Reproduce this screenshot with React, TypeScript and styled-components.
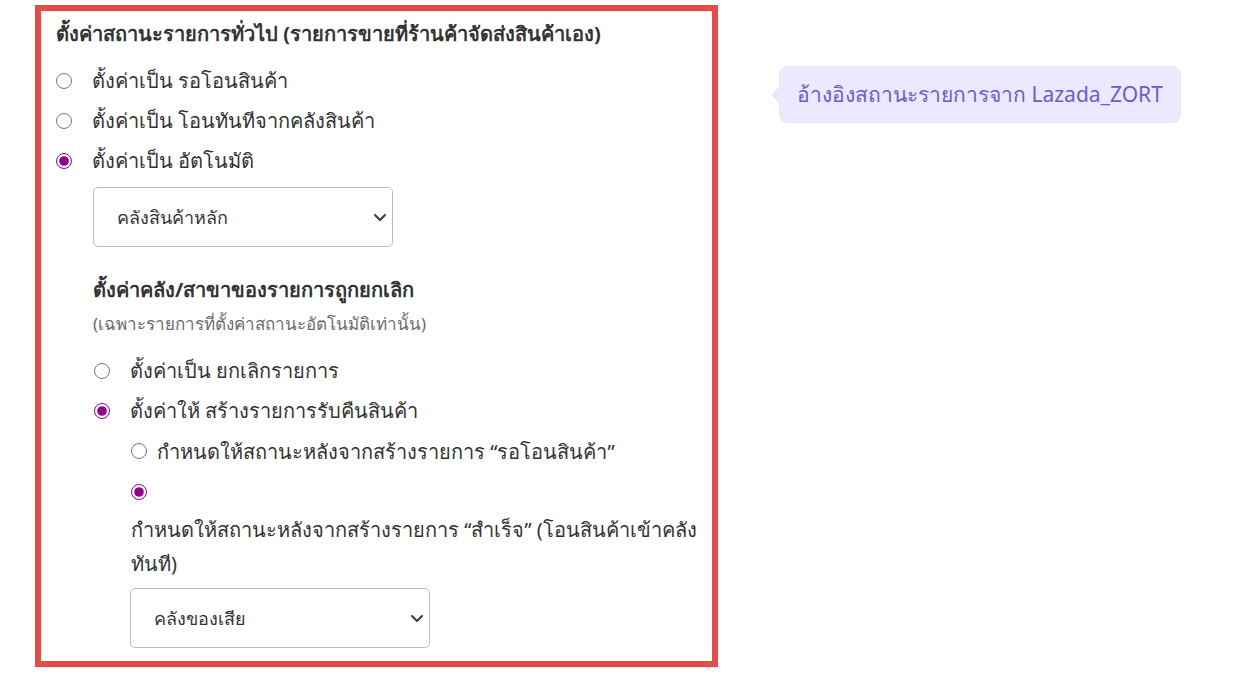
import React, { useState } from 'react';
import styled, { createGlobalStyle } from 'styled-components';

const GlobalStyle = createGlobalStyle`
  body {
    margin: 0;
    background: #ffffff;
    font-family: 'Noto Sans', 'Liberation Sans', sans-serif;
    color: #333333;
  }
`;

const Page = styled.div`
  display: flex;
  align-items: flex-start;
  padding: 5px 0 0 35px;
  width: 1239px;
  height: 678px;
  box-sizing: border-box;
`;

const Frame = styled.div`
  width: 683px;
  height: 662px;
  box-sizing: border-box;
  border: 6px solid #e84a47;
  padding: 6px 15px 0 15px;
`;

const Title = styled.div`
  font-size: 20px;
  font-weight: 700;
  line-height: 34px;
  margin-bottom: 10px;
`;

const Option = styled.label<{ $indent?: number }>`
  display: flex;
  align-items: center;
  gap: 20px;
  height: 40px;
  font-size: 20px;
  margin-left: ${(p) => p.$indent || 0}px;
  cursor: pointer;
`;

const Radio = styled.input.attrs({ type: 'radio' })`
  width: 16px;
  height: 16px;
  margin: 0;
  accent-color: #960092;
  flex-shrink: 0;
`;

const SubOption = styled.label`
  display: flex;
  flex-wrap: wrap;
  align-items: center;
  column-gap: 10px;
  font-size: 20px;
  line-height: 34px;
  margin-left: 75px;
  cursor: pointer;
  ${Radio} {
    margin: 12px 0 13px 0;
  }
`;

const SubText = styled.span`
  max-width: 100%;
`;

const SelectWrap = styled.div<{ $indent: number; $top: number }>`
  position: relative;
  width: 300px;
  margin: ${(p) => p.$top}px 0 0 ${(p) => p.$indent}px;
`;

const Select = styled.select`
  appearance: none;
  width: 100%;
  height: 60px;
  border: 1px solid #b9bec4;
  border-radius: 5px;
  background: #fff;
  padding: 0 40px 0 23px;
  font-family: inherit;
  font-size: 18px;
  color: #333;
  outline: none;
`;

const Chevron = styled.svg`
  position: absolute;
  right: 5px;
  top: 50%;
  transform: translateY(-50%);
  pointer-events: none;
`;

const Section = styled.div`
  margin: 25px 0 12px 37px;
`;

const SubTitle = styled.div`
  font-size: 20px;
  font-weight: 700;
  line-height: 36px;
`;

const Note = styled.div`
  font-size: 17px;
  color: #6b6b6b;
  line-height: 30px;
  margin-top: 1px;
`;

const Tip = styled.div`
  position: relative;
  margin: 61px 0 0 61px;
  background: #ebe9fe;
  color: #6b5bd6;
  font-size: 21px;
  line-height: 29px;
  border-radius: 8px;
  padding: 14px 18px 14px 18px;
  &::before {
    content: '';
    position: absolute;
    left: -8px;
    top: 50%;
    margin-top: -8px;
    border-top: 8px solid transparent;
    border-bottom: 8px solid transparent;
    border-right: 8px solid #ebe9fe;
  }
`;

function Dropdown({ value, indent, top }: { value: string; indent: number; top: number }) {
  return (
    <SelectWrap $indent={indent} $top={top}>
      <Select defaultValue={value}>
        <option value={value}>{value}</option>
      </Select>
      <Chevron width="16" height="16" viewBox="0 0 16 16">
        <path d="M3 6l5 5 5-5" fill="none" stroke="#343a40" strokeWidth="2" strokeLinecap="round" strokeLinejoin="round" />
      </Chevron>
    </SelectWrap>
  );
}

export default function App() {
  const [mode, setMode] = useState('auto');
  const [cancel, setCancel] = useState('return');
  const [after, setAfter] = useState('done');

  return (
    <>
      <GlobalStyle />
      <Page>
        <Frame>
          <Title>ตั้งค่าสถานะรายการทั่วไป (รายการขายที่ร้านค้าจัดส่งสินค้าเอง)</Title>
          <Option>
            <Radio name="mode" checked={mode === 'wait'} onChange={() => setMode('wait')} />
            ตั้งค่าเป็น รอโอนสินค้า
          </Option>
          <Option>
            <Radio name="mode" checked={mode === 'now'} onChange={() => setMode('now')} />
            ตั้งค่าเป็น โอนทันทีจากคลังสินค้า
          </Option>
          <Option>
            <Radio name="mode" checked={mode === 'auto'} onChange={() => setMode('auto')} />
            ตั้งค่าเป็น อัตโนมัติ
          </Option>
          <Dropdown value="คลังสินค้าหลัก" indent={37} top={6} />

          <Section>
            <SubTitle>ตั้งค่าคลัง/สาขาของรายการถูกยกเลิก</SubTitle>
            <Note>(เฉพาะรายการที่ตั้งค่าสถานะอัตโนมัติเท่านั้น)</Note>
          </Section>
          <Option $indent={38}>
            <Radio name="cancel" checked={cancel === 'cancel'} onChange={() => setCancel('cancel')} />
            ตั้งค่าเป็น ยกเลิกรายการ
          </Option>
          <Option $indent={38}>
            <Radio name="cancel" checked={cancel === 'return'} onChange={() => setCancel('return')} />
            ตั้งค่าให้ สร้างรายการรับคืนสินค้า
          </Option>
          <SubOption>
            <Radio name="after" checked={after === 'wait'} onChange={() => setAfter('wait')} />
            <SubText>กำหนดให้สถานะหลังจากสร้างรายการ “รอโอนสินค้า”</SubText>
          </SubOption>
          <SubOption>
            <Radio name="after" checked={after === 'done'} onChange={() => setAfter('done')} />
            <SubText>กำหนดให้สถานะหลังจากสร้างรายการ “สำเร็จ” (โอนสินค้าเข้าคลังทันที)</SubText>
          </SubOption>
          <Dropdown value="คลังของเสีย" indent={74} top={7} />
        </Frame>
        <Tip>อ้างอิงสถานะรายการจาก Lazada_ZORT</Tip>
      </Page>
    </>
  );
}
